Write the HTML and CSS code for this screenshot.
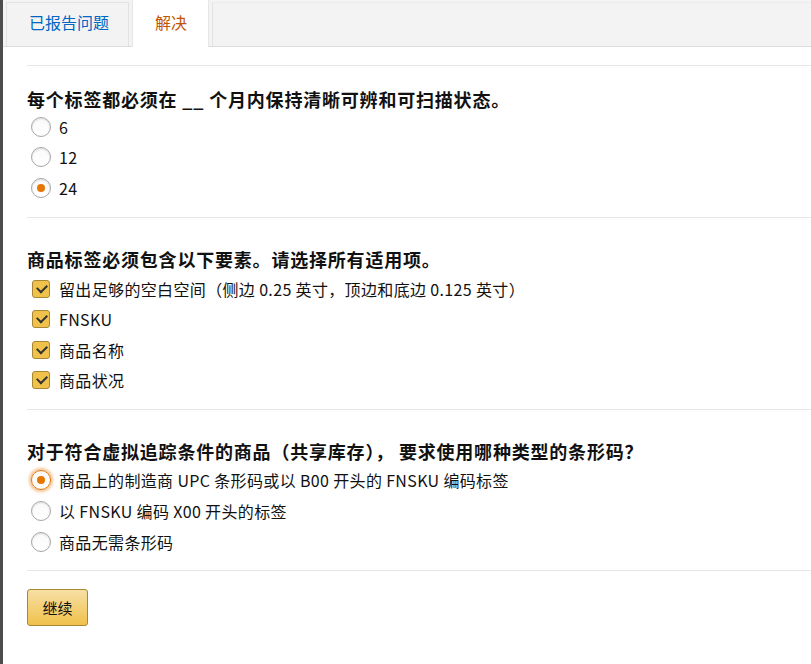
FILE: index.html
```html
<!DOCTYPE html>
<html lang="zh-CN">
 <head>
   <title>解决</title>
   <meta charset="utf-8"/>
   <link rel="stylesheet" href="styles.css">
 </head>
 <body>
   <div id="wrap">
      <ul class="tabs">
         <li class="tab">已报告问题</li>
         <li class="tab on">解决</li>
         <li class="tab_rest"></li>
      </ul>

      <form class="quiz">
         <section class="q first">
            <h3>每个标签都必须在 __ 个月内保持清晰可辨和可扫描状态。</h3>
            <label class="opt"><input type="radio" name="q1"> 6</label>
            <label class="opt"><input type="radio" name="q1"> 12</label>
            <label class="opt"><input type="radio" name="q1" checked> 24</label>
         </section>

         <section class="q q2">
            <h3>商品标签必须包含以下要素。请选择所有适用项。</h3>
            <label class="opt"><input type="checkbox" checked> 留出足够的空白空间（侧边 0.25 英寸，顶边和底边 0.125 英寸）</label>
            <label class="opt"><input type="checkbox" checked> FNSKU</label>
            <label class="opt"><input type="checkbox" checked> 商品名称</label>
            <label class="opt"><input type="checkbox" checked> 商品状况</label>
         </section>

         <section class="q q3">
            <h3>对于符合虚拟追踪条件的商品（共享库存）， 要求使用哪种类型的条形码？</h3>
            <label class="opt"><input type="radio" name="q3" class="focus" checked> 商品上的制造商 UPC 条形码或以 B00 开头的 FNSKU 编码标签</label>
            <label class="opt"><input type="radio" name="q3"> 以 FNSKU 编码 X00 开头的标签</label>
            <label class="opt"><input type="radio" name="q3"> 商品无需条形码</label>
         </section>

         <div class="btn_area">
            <button type="button" class="btn">继续</button>
         </div>
      </form>
   </div>
 </body>
</html>
```

FILE: styles.css
```css
/*####### reset #######*/
*{margin:0; padding:0; box-sizing:border-box;}
ul{list-style:none;}

body{background:#fff; color:#111; font-family:"Noto Sans CJK SC", "Noto Sans", sans-serif;}
#wrap{min-height:664px; border-left:3px solid #4d4d4d;}

/*####### tabs #######*/
.tabs{display:flex; align-items:flex-end; height:47px; background:#f3f3f3; border-bottom:1px solid #dcdcdc; padding-left:3px;}
.tab{height:44px; line-height:38px; font-size:16px; color:#0066c0; border:1px solid #e2e2e2; border-bottom:none; padding-left:22px; width:123px;}
.tab.on{width:77px; height:47px; margin-left:3px; margin-bottom:-1px; background:#fff; color:#c45500; padding-left:22px; line-height:44px; border-color:#e6e6e6; border-top:none;}
.tab_rest{flex:1; height:44px; border-left:1px solid #e2e2e2; border-top:1px solid #ececec; margin-left:3px;}

/*####### quiz #######*/
.quiz{padding-left:24px;}
.q{border-top:1px solid #e7e7e7; padding:29px 0 13px;}
.q.first{margin-top:18px; padding-top:21px; padding-bottom:14px;}
.q h3{font-size:18px; font-weight:bold; line-height:24px; margin-bottom:1px; color:#111; letter-spacing:0.8px;}
.q2{padding-bottom:14px;}
.q2 h3{margin-bottom:3px;}
.q3 h3{margin-bottom:1px;}

.opt{display:flex; align-items:center; gap:8px; height:30.3px; font-size:16px; color:#111; padding-left:4px; letter-spacing:0.35px;}
.q3 .opt{height:31px;}

/* radio */
.opt input[type=radio]{appearance:none; -webkit-appearance:none; width:20px; height:20px; border-radius:50%; border:1px solid #a6a6a6; background:linear-gradient(#fafafa,#fff); box-shadow:inset 0 1px 2px rgba(0,0,0,.12); position:relative; flex:none;}
.opt input[type=radio]:checked:after{content:""; position:absolute; left:5px; top:5px; width:8px; height:8px; border-radius:50%; background:#e77600;}
.opt input.focus{border-color:#e77600; box-shadow:0 0 3px 2px rgba(228,121,17,.45);}

/* checkbox */
.opt input[type=checkbox]{appearance:none; -webkit-appearance:none; width:18px; height:18px; border-radius:3px; border:1px solid #a88734; background:#f0c14b; position:relative; flex:none; margin-left:1px; margin-right:1px;}
.opt input[type=checkbox]:checked:after{content:""; position:absolute; left:4px; top:3px; width:8px; height:5px; border-left:2.5px solid #333; border-bottom:2.5px solid #333; transform:rotate(-45deg);}

/*####### button #######*/
.btn_area{border-top:1px solid #e7e7e7; padding-top:18px;}
.btn{width:61px; height:37px; border:1px solid #a88734; border-radius:3px; background:linear-gradient(#f7dfa5,#f0c14b); font-family:"Noto Sans CJK SC", sans-serif; font-size:15px; color:#111;}
```
